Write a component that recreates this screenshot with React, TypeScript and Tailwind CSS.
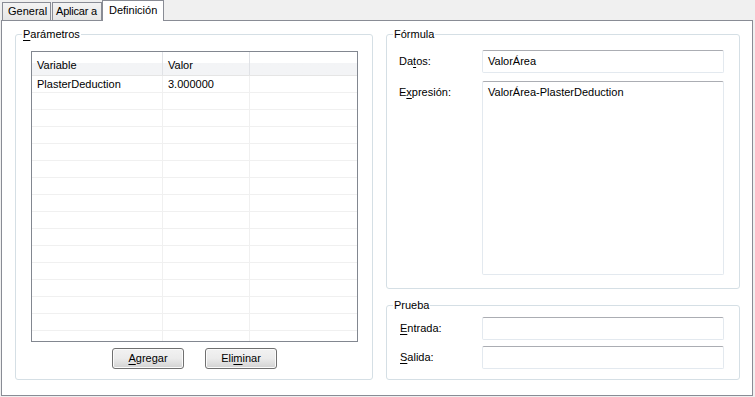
import React from "react";

const font = "[font-family:'Liberation_Sans',Arial,sans-serif] text-[11px] leading-[13px] text-[#000000]";

const U = ({ children }: { children: React.ReactNode }) => (
  <span className="underline underline-offset-[2px]">{children}</span>
);

const Group = ({
  title,
  className,
  children,
}: {
  title: React.ReactNode;
  className: string;
  children: React.ReactNode;
}) => (
  <fieldset className={`border border-[#d5dfe5] rounded-[3px] px-0 min-w-0 ${className}`}>
    <legend className="ml-[6px] px-[1px] leading-[13px]">{title}</legend>
    {children}
  </fieldset>
);

const Field = ({ value, className }: { value?: string; className: string }) => (
  <div
    className={`w-[242px] border border-[#e3e9ef] border-t-[#abadb3] rounded-[2px] bg-white pl-[5px] ${className}`}
  >
    {value}
  </div>
);

const Button = ({ children }: { children: React.ReactNode }) => (
  <button className="w-[72px] h-[21px] border border-[#707070] rounded-[3px] bg-linear-to-b from-[#f2f2f2] via-[#ebebeb] to-[#d2d2d2] shadow-[inset_0_0_0_1px_#fbfbfb] flex items-center justify-center">
    {children}
  </button>
);

const rows = [
  ["PlasterDeduction", "3.000000"],
  ...Array.from({ length: 15 }, () => ["", ""]),
];

export default function App() {
  return (
    <div className={`w-[755px] h-[397px] bg-[#f0f0f0] overflow-hidden ${font}`}>
      {/* tabs */}
      <div className="flex items-end h-[20px] pl-[2px]">
        <div className="w-[49px] h-[18px] border border-b-0 border-[#898c95] bg-linear-to-b from-[#f3f3f3] to-[#e6e6e6] pl-[5px] pt-[2px]">
          General
        </div>
        <div className="w-[50px] h-[18px] ml-[1px] border border-b-0 border-[#898c95] bg-linear-to-b from-[#f3f3f3] to-[#e6e6e6] pl-[3px] pt-[2px] whitespace-nowrap overflow-hidden tracking-[-0.2px]">
          Aplicar a
        </div>
        <div className="relative z-10 w-[62px] h-[21px] -mb-px border border-b-0 border-[#898c95] bg-white pl-[6px] pt-[3px]">
          Definición
        </div>
      </div>

      {/* panel */}
      <div className="ml-[1px] w-[752px] h-[376px] border border-[#898c95] bg-white flex pl-[13px] pt-[7px] gap-[13px]">
        <Group title={<><U>P</U>arámetros</>} className="w-[358px] h-[352px]">
          <div className="ml-[15px] mt-[10px] w-[327px] h-[291px] border border-[#828790] overflow-hidden">
            <div className="flex h-[24px] border-b border-[#e5e5e5] bg-linear-to-b from-[#ffffff] from-50% to-[#f3f4f6] to-50%">
              <div className="w-[131px] border-r border-[#e0e2e6] pl-[5px] pt-[3px] flex items-center">Variable</div>
              <div className="w-[87px] border-r border-[#e0e2e6] pl-[5px] pt-[3px] flex items-center">Valor</div>
              <div className="flex-1" />
            </div>
            {rows.map((r, i) => (
              <div key={i} className="flex h-[17px] border-b border-[#f0f0f0]">
                <div className="w-[131px] border-r border-[#f0f0f0] pl-[5px] pt-[1px] flex items-center">{r[0]}</div>
                <div className="w-[87px] border-r border-[#f0f0f0] pl-[5px] pt-[1px] flex items-center">{r[1]}</div>
                <div className="flex-1" />
              </div>
            ))}
          </div>
          <div className="flex justify-center gap-[21px] mt-[6px] ml-[15px] w-[327px]">
            <Button>
              <U>A</U>gregar
            </Button>
            <Button>
              Eli<U>m</U>inar
            </Button>
          </div>
        </Group>

        <div className="flex flex-col gap-[10px]">
          <Group title="Fórmula" className="w-[354px] h-[261px]">
            <div className="flex items-center pl-[12px] mt-[9px]">
              <div className="w-[83px]">
                Da<U>t</U>os:
              </div>
              <Field value="ValorÁrea" className="h-[23px] flex items-center" />
            </div>
            <div className="flex pl-[12px] mt-[8px]">
              <div className="w-[83px] pt-[5px]">
                E<U>x</U>presión:
              </div>
              <Field value="ValorÁrea-PlasterDeduction" className="h-[194px] pt-[4px]" />
            </div>
          </Group>

          <Group title="Prueba" className="w-[354px] h-[81px]">
            <div className="flex items-center pl-[13px] mt-[5px]">
              <div className="w-[82px]">
                <U>E</U>ntrada:
              </div>
              <Field className="h-[23px]" />
            </div>
            <div className="flex items-center pl-[13px] mt-[6px]">
              <div className="w-[82px]">
                <U>S</U>alida:
              </div>
              <Field className="h-[23px]" />
            </div>
          </Group>
        </div>
      </div>
    </div>
  );
}
